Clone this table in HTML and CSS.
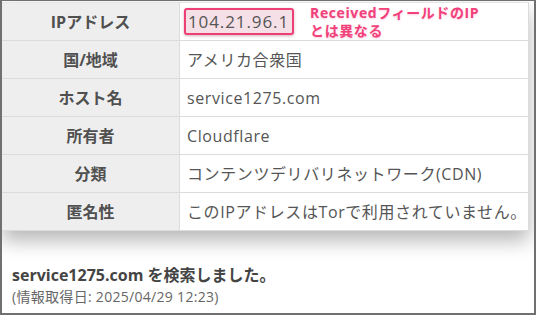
FILE: index.html
```html
<!DOCTYPE html>
<html lang="ja">
<head>
    <meta charset="UTF-8">
    <meta name="viewport" content="width=device-width, initial-scale=1.0">
    <title>IPアドレス検索結果</title>
    <link rel="stylesheet" href="styles.css">
</head>
<body>
    <div class="frame">
        <table class="info-table">
            <tr>
                <th>IPアドレス</th>
                <td>
                    <div class="ip-cell">
                        <span class="ip-box">104.21.96.1</span>
                        <span class="note">ReceivedフィールドのIP<br>とは異なる</span>
                    </div>
                </td>
            </tr>
            <tr>
                <th>国/地域</th>
                <td>アメリカ合衆国</td>
            </tr>
            <tr>
                <th>ホスト名</th>
                <td>service1275.com</td>
            </tr>
            <tr>
                <th>所有者</th>
                <td>Cloudflare</td>
            </tr>
            <tr>
                <th>分類</th>
                <td>コンテンツデリバリネットワーク(CDN)</td>
            </tr>
            <tr>
                <th>匿名性</th>
                <td>このIPアドレスはTorで利用されていません。</td>
            </tr>
        </table>

        <div class="summary">
            <p class="searched">service1275.com を検索しました。</p>
            <p class="fetched">(情報取得日: 2025/04/29 12:23)</p>
        </div>
    </div>
</body>
</html>
```

FILE: styles.css
```css
body {
    margin: 0;
    padding: 0;
    background-color: #fff;
    color: #555;
    font-family: 'Open Sans', 'Noto Sans CJK JP', sans-serif;
}
.frame {
    width: 536px;
    height: 315px;
    box-sizing: border-box;
    border: 2px solid #707070;
    border-top-width: 1px;
    padding-top: 1px;
    overflow: hidden;
}
.info-table {
    width: 527px;
    border-collapse: collapse;
    box-shadow: 0 10px 18px rgba(0, 0, 0, 0.28);
    background: #fff;
}
.info-table th,
.info-table td {
    height: 37px;
    padding: 0;
    border: 1px solid #dcdcdc;
    font-size: 16px;
    line-height: 20px;
    color: #555;
}
.info-table tr:first-child th,
.info-table tr:first-child td {
    border-top-color: #e4e4e4;
}
.info-table th {
    width: 177px;
    background-color: #eeeeee;
    font-weight: bold;
    text-align: center;
    border-left: none;
    color: #505050;
}
.info-table td {
    padding-left: 7px;
    text-align: left;
    letter-spacing: 0.6px;
}
.ip-cell {
    display: flex;
    align-items: center;
    gap: 16px;
}
.ip-box {
    display: inline-block;
    height: 23px;
    line-height: 23px;
    padding: 0 3px 0 2px;
    margin-left: -3px;
    border: 2px solid #ee3f76;
    border-radius: 3px;
    background-color: #f4e0e6;
    box-shadow: 0 1px 3px rgba(120, 40, 60, 0.35);
    font-size: 17px;
    letter-spacing: 0.9px;
}
.note {
    color: #f2407a;
    font-size: 14px;
    font-weight: bold;
    line-height: 18px;
    letter-spacing: 0.6px;
    text-shadow: 0 1px 2px rgba(240, 64, 122, 0.25);
}
.summary {
    padding: 33px 0 0 10px;
}
.summary p {
    margin: 0;
}
.searched {
    font-size: 16px;
    font-weight: bold;
    line-height: 22px;
    color: #444;
}
.fetched {
    margin-top: 1px;
    font-size: 14px;
    line-height: 22px;
    letter-spacing: 0.3px;
    color: #666;
}
```
